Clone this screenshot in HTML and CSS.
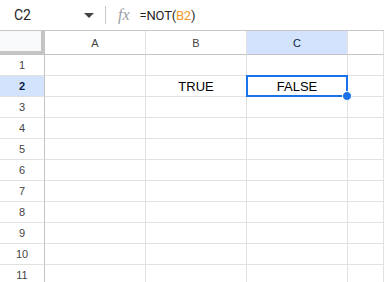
FILE: index.html
```html
<!DOCTYPE html>
<html>
<head>
  <title>NOT function</title>
  <link rel="stylesheet" href="styles.css">
</head>
<body>
  <div class="formula-bar">
    <div class="name-box">
      <span class="cell-ref">C2</span>
      <svg class="caret" width="10" height="5" viewBox="0 0 10 5"><path d="M0 0h10L5 5z" fill="#444"/></svg>
    </div>
    <div class="divider"></div>
    <span class="fx">fx</span>
    <span class="formula">=NOT(<span class="ref">B2</span>)</span>
  </div>

  <div class="sheet">
    <div class="corner"></div>
    <div class="col-head">A</div>
    <div class="col-head">B</div>
    <div class="col-head active">C</div>
    <div class="col-head"></div>

    <div class="row-head">1</div><div class="cell"></div><div class="cell"></div><div class="cell"></div><div class="cell"></div>
    <div class="row-head active">2</div><div class="cell"></div><div class="cell">TRUE</div>
    <div class="cell selected">FALSE<span class="sel-box"></span><span class="handle"></span></div><div class="cell"></div>
    <div class="row-head">3</div><div class="cell"></div><div class="cell"></div><div class="cell"></div><div class="cell"></div>
    <div class="row-head">4</div><div class="cell"></div><div class="cell"></div><div class="cell"></div><div class="cell"></div>
    <div class="row-head">5</div><div class="cell"></div><div class="cell"></div><div class="cell"></div><div class="cell"></div>
    <div class="row-head">6</div><div class="cell"></div><div class="cell"></div><div class="cell"></div><div class="cell"></div>
    <div class="row-head">7</div><div class="cell"></div><div class="cell"></div><div class="cell"></div><div class="cell"></div>
    <div class="row-head">8</div><div class="cell"></div><div class="cell"></div><div class="cell"></div><div class="cell"></div>
    <div class="row-head">9</div><div class="cell"></div><div class="cell"></div><div class="cell"></div><div class="cell"></div>
    <div class="row-head">10</div><div class="cell"></div><div class="cell"></div><div class="cell"></div><div class="cell"></div>
    <div class="row-head">11</div><div class="cell"></div><div class="cell"></div><div class="cell"></div><div class="cell"></div>
  </div>
</body>
</html>
```

FILE: styles.css
```css
body {
  margin: 0;
  background-color: #fff;
  font-family: "Liberation Sans", Arial, sans-serif;
  overflow: hidden;
}

.formula-bar {
  display: flex;
  align-items: center;
  height: 30px;
  border-bottom: 1px solid #c7c7c7;
  font-family: Roboto, "Liberation Sans", sans-serif;
  color: #1f1f1f;
}

.name-box {
  display: flex;
  align-items: center;
  justify-content: space-between;
  width: 80px;
  padding-left: 14px;
  padding-right: 11px;
}

.cell-ref {
  font-size: 14px;
}

.divider {
  width: 1px;
  height: 18px;
  background-color: #c7c7c7;
}

.fx {
  margin-left: 12px;
  margin-right: 10px;
  font-family: "Liberation Serif", serif;
  font-style: italic;
  font-size: 16px;
  color: #9aa0a6;
}

.formula {
  font-size: 13px;
  letter-spacing: -0.2px;
}

.formula .ref {
  color: #f09a2e;
}

.sheet {
  display: grid;
  grid-template-columns: 45px 101px 101px 101px 1fr;
  grid-template-rows: 24px;
  grid-auto-rows: 21px;
}

.sheet > div {
  box-sizing: border-box;
  border-right: 1px solid #e1e1e1;
  border-bottom: 1px solid #e1e1e1;
}

.sheet .corner {
  background-color: #f8f9fa;
  border-right: 4px solid #c4c4c4;
  border-bottom: 4px solid #c4c4c4;
}

.col-head,
.row-head {
  display: flex;
  align-items: center;
  justify-content: center;
  font-size: 11px;
  color: #444;
}

.sheet .col-head {
  border-bottom-color: #c4c4c4;
}

.sheet .row-head {
  border-right-color: #c4c4c4;
}

.col-head.active,
.row-head.active {
  background-color: #d3e3fd;
  color: #0b1f44;
  font-weight: bold;
}

.col-head.active {
  font-weight: normal;
}

.cell {
  position: relative;
  display: flex;
  align-items: center;
  justify-content: center;
  font-size: 13px;
  color: #000;
}

.sel-box {
  position: absolute;
  top: -1px;
  left: -1px;
  right: -1px;
  bottom: -1px;
  border: 2px solid #1a73e8;
}

.handle {
  position: absolute;
  right: -5px;
  bottom: -5px;
  width: 8px;
  height: 8px;
  border-radius: 50%;
  background-color: #1a73e8;
  border: 1px solid #fff;
  z-index: 1;
}
```
